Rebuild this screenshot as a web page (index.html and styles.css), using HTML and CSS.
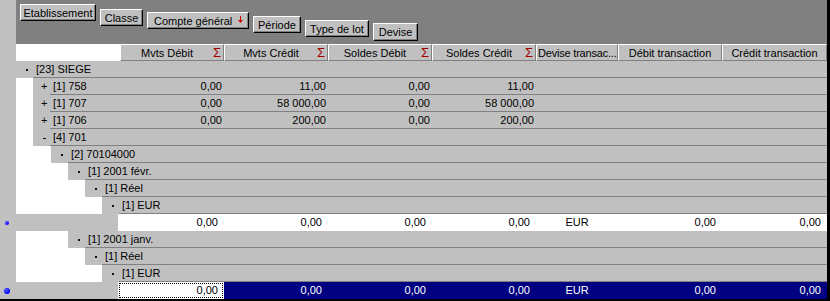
FILE: index.html
```html
<!DOCTYPE html>
<html lang="fr">
<head>
<meta charset="utf-8">
<title>Grille</title>
<link rel="stylesheet" href="styles.css">
</head>
<body>
<div class="app">
  <div class="toolbar">
    <div class="gutter"></div>
    <div class="groups">
      <div class="btn b1">Etablissement</div>
      <div class="btn b2">Classe</div>
      <div class="btn b3"><span>Compte général</span><svg class="arrow" width="5" height="7" viewBox="0 0 5 7"><path d="M2 0h1v4h2l-2.5 3L0 4h2z" fill="#d00000"/></svg></div>
      <div class="btn b4">Période</div>
      <div class="btn b5">Type de lot</div>
      <div class="btn b6">Devise</div>
    </div>
  </div>

  <div class="hdr">
    <div class="gutter"></div>
    <div class="corner"></div>
    <div class="hc"><span class="ht">Mvts Débit</span><span class="sig">Σ</span></div>
    <div class="hc"><span class="ht">Mvts Crédit</span><span class="sig">Σ</span></div>
    <div class="hc"><span class="ht">Soldes Débit</span><span class="sig">Σ</span></div>
    <div class="hc"><span class="ht">Soldes Crédit</span><span class="sig">Σ</span></div>
    <div class="hc dev"><span class="ht left">Devise transac...</span></div>
    <div class="hc"><span class="ht">Débit transaction</span></div>
    <div class="hc last"><span class="ht">Crédit transaction</span></div>
  </div>

  <div class="row">
    <div class="gutter"></div>
    <div class="tg"><span class="dash"></span></div>
    <div class="main"><span class="lbl">[23] SIEGE</span></div>
  </div>
  <div class="row">
    <div class="gutter"></div><div class="ind i1"></div>
    <div class="tg plus">+</div>
    <div class="main"><span class="lbl fixed">[1] 758</span><span class="v">0,00</span><span class="v">11,00</span><span class="v">0,00</span><span class="v">11,00</span></div>
  </div>
  <div class="row">
    <div class="gutter"></div><div class="ind i1"></div>
    <div class="tg plus">+</div>
    <div class="main"><span class="lbl fixed">[1] 707</span><span class="v">0,00</span><span class="v">58 000,00</span><span class="v">0,00</span><span class="v">58 000,00</span></div>
  </div>
  <div class="row">
    <div class="gutter"></div><div class="ind i1"></div>
    <div class="tg plus">+</div>
    <div class="main"><span class="lbl fixed">[1] 706</span><span class="v">0,00</span><span class="v">200,00</span><span class="v">0,00</span><span class="v">200,00</span></div>
  </div>
  <div class="row">
    <div class="gutter"></div><div class="ind i1"></div>
    <div class="tg"><span class="dash wide"></span></div>
    <div class="main"><span class="lbl">[4] 701</span></div>
  </div>
  <div class="row">
    <div class="gutter"></div><div class="ind i2"></div>
    <div class="tg"><span class="dash"></span></div>
    <div class="main"><span class="lbl">[2] 70104000</span></div>
  </div>
  <div class="row">
    <div class="gutter"></div><div class="ind i3"></div>
    <div class="tg"><span class="dash"></span></div>
    <div class="main"><span class="lbl">[1] 2001 févr.</span></div>
  </div>
  <div class="row">
    <div class="gutter"></div><div class="ind i4"></div>
    <div class="tg"><span class="dash"></span></div>
    <div class="main"><span class="lbl">[1] Réel</span></div>
  </div>
  <div class="row">
    <div class="gutter"></div><div class="ind i5"></div>
    <div class="tg"><span class="dash"></span></div>
    <div class="main"><span class="lbl">[1] EUR</span></div>
  </div>

  <div class="row data">
    <div class="gutter"><span class="dot"></span></div>
    <div class="rh"></div>
    <div class="dc first">0,00</div>
    <div class="dc">0,00</div>
    <div class="dc">0,00</div>
    <div class="dc">0,00</div>
    <div class="dc dev">EUR</div>
    <div class="dc">0,00</div>
    <div class="dc last">0,00</div>
  </div>

  <div class="row">
    <div class="gutter"></div><div class="ind i3"></div>
    <div class="tg"><span class="dash"></span></div>
    <div class="main"><span class="lbl">[1] 2001 janv.</span></div>
  </div>
  <div class="row">
    <div class="gutter"></div><div class="ind i4"></div>
    <div class="tg"><span class="dash"></span></div>
    <div class="main"><span class="lbl">[1] Réel</span></div>
  </div>
  <div class="row">
    <div class="gutter"></div><div class="ind i5"></div>
    <div class="tg"><span class="dash"></span></div>
    <div class="main"><span class="lbl">[1] EUR</span></div>
  </div>

  <div class="row data sel">
    <div class="gutter"><span class="dot big"></span></div>
    <div class="rh"></div>
    <div class="dc first focus">0,00</div>
    <div class="dc">0,00</div>
    <div class="dc">0,00</div>
    <div class="dc">0,00</div>
    <div class="dc dev">EUR</div>
    <div class="dc">0,00</div>
    <div class="dc last">0,00</div>
  </div>
</div>
</body>
</html>
```

FILE: styles.css
```css
html, body {
  margin: 0;
  padding: 0;
  background: #c0c0c0;
}

.app {
  width: 830px;
  height: 301px;
  box-sizing: border-box;
  border-right: 3px solid #000;
  border-bottom: 2px solid #000;
  background: #c0c0c0;
  display: flex;
  flex-direction: column;
  overflow: hidden;
  font-family: "Liberation Sans", Arial, sans-serif;
  font-size: 11px;
  color: #000;
}

.gutter {
  width: 16px;
  flex: none;
  background: #c0c0c0;
  display: flex;
  align-items: center;
}

/* toolbar with grouping buttons */
.toolbar {
  height: 44px;
  flex: none;
  display: flex;
}

.groups {
  flex: 1;
  background: #808080;
  display: flex;
  align-items: flex-start;
  gap: 4px;
  padding-left: 4px;
}

.btn {
  box-sizing: border-box;
  height: 17px;
  background: #c0c0c0;
  border: 1px solid;
  border-color: #fff #000 #000 #fff;
  box-shadow: inset -1px -1px #808080;
  line-height: 16px;
  text-align: center;
  white-space: nowrap;
}

.b1 { width: 76px; margin-top: 4px; }
.b2 { width: 43px; margin-top: 9px; }
.b3 {
  width: 102px;
  margin-top: 12px;
  display: flex;
  align-items: center;
  justify-content: space-between;
  padding: 0 5px 0 6px;
}
.b4 { width: 48px; margin-top: 16px; }
.b5 { width: 64px; margin-top: 20px; }
.b6 { width: 45px; margin-top: 23px; height: 18px; line-height: 17px; }

.arrow { display: block; margin-top: -2px; }

/* column header */
.hdr {
  height: 17px;
  flex: none;
  display: flex;
}

.corner {
  width: 104px;
  flex: none;
  background: #fff;
}

.hc {
  box-sizing: border-box;
  width: 104px;
  flex: none;
  border: 1px solid;
  border-color: #fff #808080 #808080 #fff;
  display: flex;
  align-items: center;
  white-space: nowrap;
  overflow: hidden;
}

.hc.dev { width: 82px; }
.hc.last { width: 105px; }

.ht {
  flex: 1;
  text-align: center;
}

.ht.left {
  text-align: left;
  padding-left: 1px;
  letter-spacing: -0.2px;
}

.sig {
  color: #a00000;
  font-size: 13px;
  padding-right: 2px;
  line-height: 13px;
}

/* tree rows */
.row {
  height: 17px;
  flex: none;
  display: flex;
}

.ind {
  flex: none;
  background: #fff;
}
.i1 { width: 17px; }
.i2 { width: 35px; }
.i3 { width: 52px; }
.i4 { width: 69px; }
.i5 { width: 86px; }

.tg {
  width: 17px;
  flex: none;
  box-sizing: border-box;
  padding: 8px 0 0 10px;
}

.tg.plus {
  padding: 0 0 0 8px;
  line-height: 16px;
}

.dash {
  display: block;
  width: 2px;
  height: 2px;
  background: #111;
}

.dash.wide { width: 3px; height: 1px; margin-top: 1px; }

.main {
  flex: 1;
  display: flex;
  border-bottom: 1px solid #808080;
  line-height: 17px;
  white-space: nowrap;
}

.lbl {
  padding-left: 3px;
}

.lbl.fixed {
  width: 70px;
  flex: none;
  box-sizing: border-box;
}

.v {
  width: 104px;
  flex: none;
  box-sizing: border-box;
  text-align: right;
  padding-right: 2px;
}

/* data rows */
.rh {
  width: 102px;
  flex: none;
  background: #c0c0c0;
}

.dc {
  width: 104px;
  flex: none;
  box-sizing: border-box;
  background: #fff;
  text-align: right;
  padding-right: 6px;
  line-height: 17px;
  white-space: nowrap;
}

.dc.first { width: 106px; }
.dc.dev { width: 82px; text-align: center; padding-right: 0; }
.dc.last { width: 105px; }

.sel .dc {
  background: #000080;
  color: #fff;
}

.sel .dc.focus {
  background: #fff;
  color: #000;
  outline: 1px dotted #000;
  outline-offset: -2px;
}

.dot {
  display: block;
  width: 4px;
  height: 4px;
  margin-left: 5px;
  border-radius: 50%;
  background: radial-gradient(circle at 35% 35%, #5a5aff, #0000ff 70%);
}

.dot.big {
  width: 6px;
  height: 6px;
  margin-left: 4px;
}
```
